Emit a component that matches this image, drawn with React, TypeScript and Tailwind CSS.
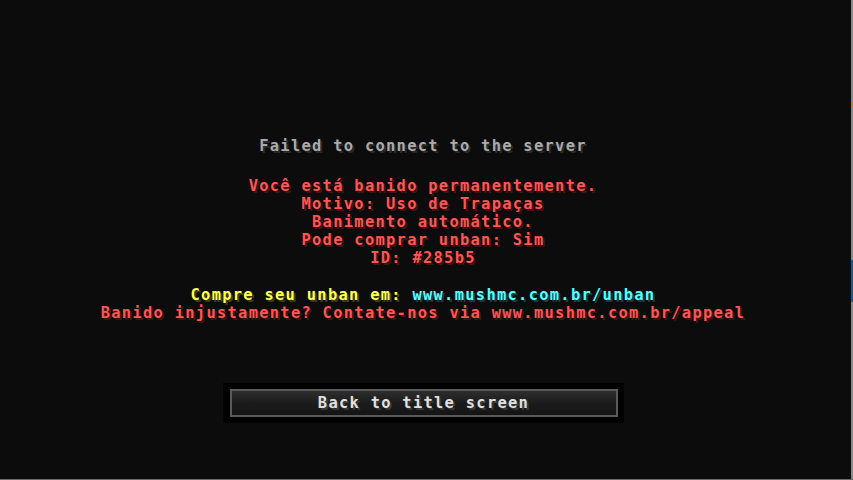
import React from "react";

const red = "text-[#ff5555] [text-shadow:2px_2px_0_#3f1515]";

export default function App() {
  return (
    <div className="flex h-[480px] w-[853px] flex-col overflow-hidden bg-[#0c0c0c]">
      <div className="flex h-[479px] w-[853px]">
        <div
          className="flex h-[479px] w-[846px] flex-col items-center pt-[137px] text-[15.4px] leading-[18px] font-bold tracking-[1.3px] whitespace-pre"
          style={{ fontFamily: '"DejaVu Sans Mono", "Liberation Mono", monospace' }}
        >
          <div className="text-[#aaaaaa] [text-shadow:2px_2px_0_#2a2a2a]">Failed to connect to the server</div>
          <div className={`mt-[22px] flex flex-col items-center ${red}`}>
            <div>Você está banido permanentemente.</div>
            <div>Motivo: Uso de Trapaças</div>
            <div>Banimento automático.</div>
            <div>Pode comprar unban: Sim</div>
            <div>ID: #285b5</div>
          </div>
          <div className="mt-[19px] flex flex-col items-center">
            <div>
              <span className="text-[#ffff55] [text-shadow:2px_2px_0_#3f3f15]">Compre seu unban em: </span>
              <span className="text-[#55ffff] [text-shadow:2px_2px_0_#153f3f]">www.mushmc.com.br/unban</span>
            </div>
            <div className={red}>Banido injustamente? Contate-nos via www.mushmc.com.br/appeal</div>
          </div>
          <div className="mt-[61px] flex h-[40px] w-[401px] bg-[#020202] pt-[6px] pr-[6px] pb-[6px] pl-[7px]">
            <div className="flex h-[28px] w-full items-center justify-center border-2 border-[#5a5a5a] bg-gradient-to-b from-[#2e2e2e] via-[#1c1c1c] to-[#141414] text-[#e0e0e0] [text-shadow:2px_2px_0_#383838]">
              Back to title screen
            </div>
          </div>
        </div>
        <div className="flex-1" />
        <div className="flex h-[479px] w-[2px] flex-col bg-[#8a8a8a]">
          <div className="mt-[102px] h-[5px] bg-[#b08040]" />
          <div className="mt-[153px] h-[42px] bg-[#1f5a8a]" />
        </div>
      </div>
      <div className="h-[1px] w-[853px] bg-[#6a6a6a]" />
    </div>
  );
}
